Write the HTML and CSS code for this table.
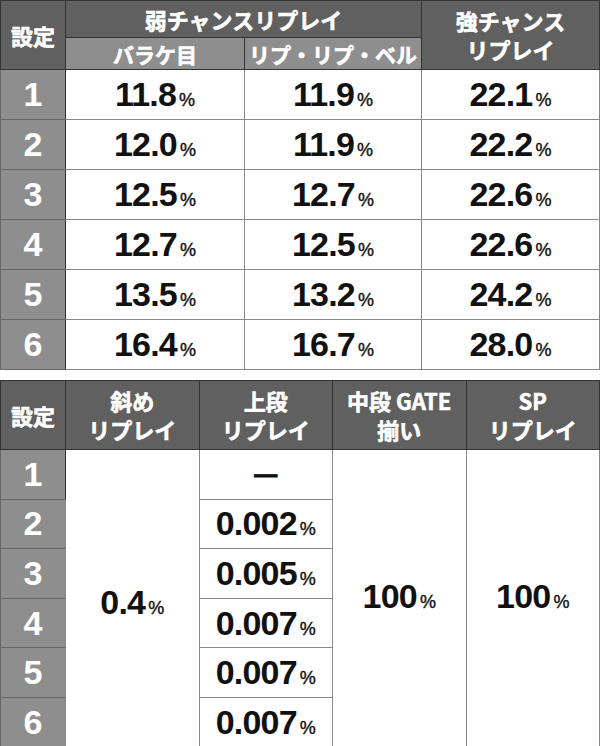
FILE: index.html
```html
<!DOCTYPE html>
<html lang="ja">
<head>
<meta charset="utf-8">
<link rel="stylesheet" href="styles.css">
</head>
<body>
<div class="page">
<table class="tbl tbl-top">
  <colgroup><col class="c-set"><col class="c-a"><col class="c-b"><col class="c-c"></colgroup>
  <thead>
    <tr class="h1">
      <th class="hd" rowspan="2">設定</th>
      <th class="hd" colspan="2">弱チャンスリプレイ</th>
      <th class="hd two" rowspan="2">強チャンス<br>リプレイ</th>
    </tr>
    <tr class="h2">
      <th class="sub">バラケ目</th>
      <th class="sub">リプ・リプ・ベル</th>
    </tr>
  </thead>
  <tbody>
    <tr><th class="rn">1</th><td><span class="n">11.8</span><span class="p">%</span></td><td><span class="n">11.9</span><span class="p">%</span></td><td><span class="n">22.1</span><span class="p">%</span></td></tr>
    <tr><th class="rn">2</th><td><span class="n">12.0</span><span class="p">%</span></td><td><span class="n">11.9</span><span class="p">%</span></td><td><span class="n">22.2</span><span class="p">%</span></td></tr>
    <tr><th class="rn">3</th><td><span class="n">12.5</span><span class="p">%</span></td><td><span class="n">12.7</span><span class="p">%</span></td><td><span class="n">22.6</span><span class="p">%</span></td></tr>
    <tr><th class="rn">4</th><td><span class="n">12.7</span><span class="p">%</span></td><td><span class="n">12.5</span><span class="p">%</span></td><td><span class="n">22.6</span><span class="p">%</span></td></tr>
    <tr><th class="rn">5</th><td><span class="n">13.5</span><span class="p">%</span></td><td><span class="n">13.2</span><span class="p">%</span></td><td><span class="n">24.2</span><span class="p">%</span></td></tr>
    <tr><th class="rn">6</th><td><span class="n">16.4</span><span class="p">%</span></td><td><span class="n">16.7</span><span class="p">%</span></td><td><span class="n">28.0</span><span class="p">%</span></td></tr>
  </tbody>
</table>

<table class="tbl tbl-bot">
  <colgroup><col class="c-set"><col class="c-q"><col class="c-q"><col class="c-q"><col class="c-q"></colgroup>
  <thead>
    <tr class="h3">
      <th class="hd">設定</th>
      <th class="hd two">斜め<br>リプレイ</th>
      <th class="hd two">上段<br>リプレイ</th>
      <th class="hd two">中段 GATE<br>揃い</th>
      <th class="hd two">SP<br>リプレイ</th>
    </tr>
  </thead>
  <tbody>
    <tr>
      <th class="rn">1</th>
      <td rowspan="6" class="merge merge-low"><span class="n">0.4</span><span class="p">%</span></td>
      <td class="dash">—</td>
      <td rowspan="6" class="merge"><span class="n">100</span><span class="p">%</span></td>
      <td rowspan="6" class="merge"><span class="n">100</span><span class="p">%</span></td>
    </tr>
    <tr><th class="rn">2</th><td><span class="n">0.002</span><span class="p">%</span></td></tr>
    <tr><th class="rn">3</th><td><span class="n">0.005</span><span class="p">%</span></td></tr>
    <tr><th class="rn">4</th><td><span class="n">0.007</span><span class="p">%</span></td></tr>
    <tr><th class="rn">5</th><td><span class="n">0.007</span><span class="p">%</span></td></tr>
    <tr><th class="rn">6</th><td><span class="n">0.007</span><span class="p">%</span></td></tr>
  </tbody>
</table>
</div>
</body>
</html>
```

FILE: styles.css
```css
html, body {
  margin: 0;
  padding: 0;
  background: #ffffff;
}

.page {
  width: 599px;
  display: flex;
  flex-direction: column;
  gap: 10px;
}

.tbl {
  width: 599px;
  table-layout: fixed;
  border-collapse: collapse;
  border: 1px solid #333333;
}

.c-set { width: 65px; }
.c-a { width: 179px; }
.c-b { width: 177px; }
.c-c { width: 178px; }
.c-q { width: 133.5px; }

.tbl th,
.tbl td {
  padding: 0;
  text-align: center;
  vertical-align: middle;
}

.hd {
  background: #606060;
  color: #ffffff;
  font-family: "Noto Sans CJK JP", "Noto Sans", sans-serif;
  font-weight: 700;
  font-size: 22px;
  line-height: 29px;
  -webkit-text-stroke: 0.6px #ffffff;
  border: 1px solid #333333;
}

.sub {
  background: #8e8e8e;
  color: #ffffff;
  font-family: "Noto Sans CJK JP", "Noto Sans", sans-serif;
  font-weight: 700;
  font-size: 21px;
  line-height: 28px;
  -webkit-text-stroke: 0.6px #ffffff;
  border: 1px solid #333333;
}

.h1 { height: 37px; }
.h2 { height: 32px; }
.h3 { height: 69px; }

.tbl-top tbody tr { height: 50px; }
.tbl-bot tbody tr { height: 49.6px; }

.rn {
  background: #8e8e8e;
  color: #ffffff;
  font-family: "Liberation Sans", Arial, sans-serif;
  font-weight: 700;
  font-size: 34px;
  border: 1px solid #666666;
  border-right-color: #333333;
}

.tbl td {
  background: #ffffff;
  color: #111111;
  border: 1px solid #888888;
  white-space: nowrap;
}

.n {
  font-family: "Liberation Sans", Arial, sans-serif;
  font-weight: 700;
  font-size: 34px;
  letter-spacing: -0.8px;
}

.p {
  font-family: "Liberation Sans", Arial, sans-serif;
  font-weight: 400;
  font-size: 18px;
  margin-left: 3px;
  -webkit-text-stroke: 0.4px #111111;
}

.dash {
  font-family: "Liberation Sans", Arial, sans-serif;
  font-weight: 700;
  font-size: 23px;
  -webkit-text-stroke: 0.8px #111111;
}

.merge {
  padding-bottom: 4px !important;
}

.merge-low {
  padding-top: 8px !important;
  padding-bottom: 0 !important;
}
```
